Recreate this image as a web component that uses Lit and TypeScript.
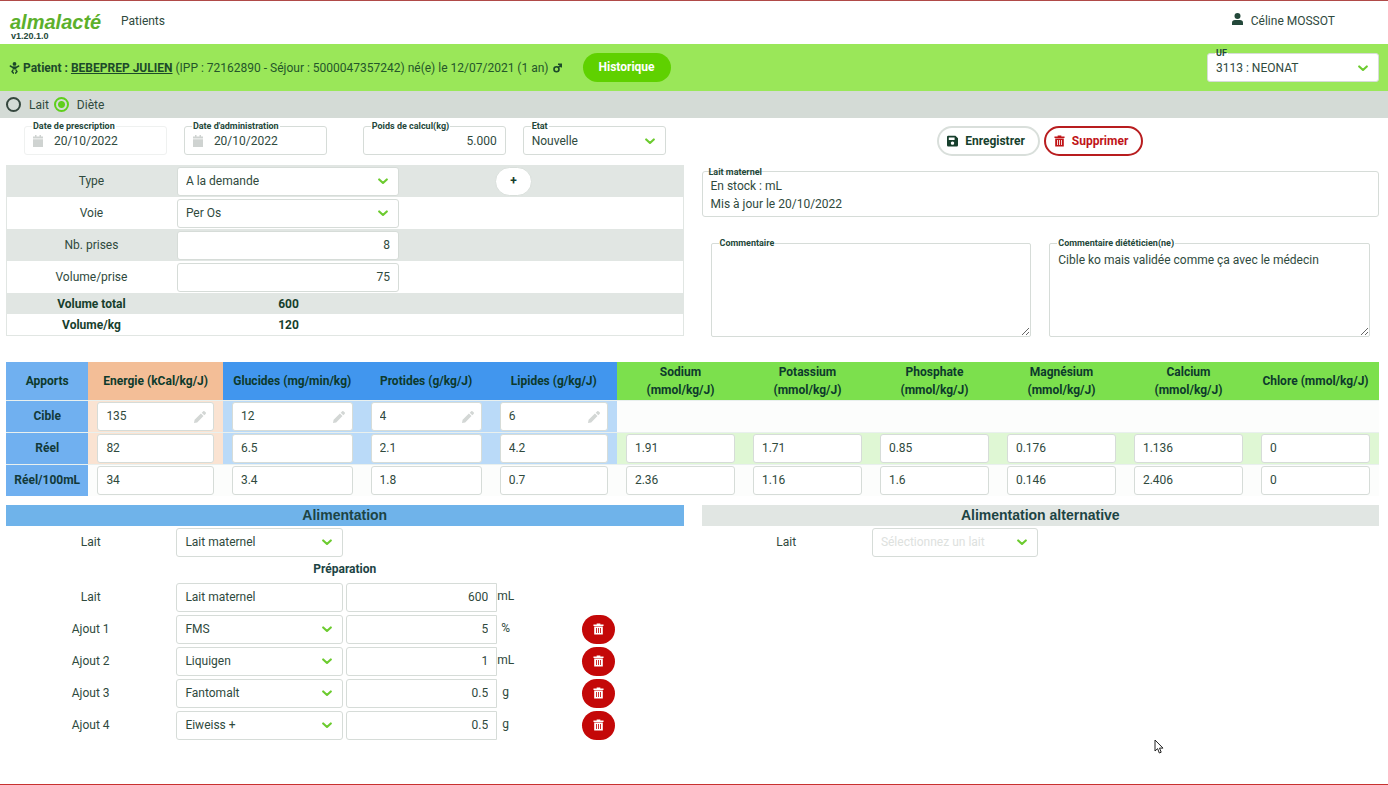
import { LitElement, html, css, svg, nothing } from "lit";
import { customElement, property } from "lit/decorators.js";

const chevron = html`<svg class="chevron" viewBox="0 0 10 7" aria-hidden="true">
  <path d="M1.2 1.4 L5 5 L8.8 1.4" fill="none" stroke="#6ccb2f" stroke-width="2.1" stroke-linecap="round" stroke-linejoin="round" />
</svg>`;

const trash = svg`<path fill="currentColor" d="M4 0h4v1h3.5v1.6H.5V1H4z" />
  <path fill="currentColor" fill-rule="evenodd" d="M1.3 3.3h9.4V12H1.3zM3.3 4.9v5.4h.9V4.9zm2.2 0v5.4h.9V4.9zm2.2 0v5.4h.9V4.9z" />`;

const pencil = html`<svg class="pencil" viewBox="0 0 12 12" aria-hidden="true">
  <path fill="#d3d7d5" d="M0 12l.6-3.2L6.900 2.500l2.600 2.600L3.200 11.400zM7.700 1.700L9 .4a1.200 1.200 0 0 1 1.700 0l.9.9a1.200 1.200 0 0 1 0 1.700L10.300 4.300z" />
</svg>`;

interface Nutrient {
  label: string;
  unit: string;
  tone: string;
  target?: string;
  real: string;
  per100: string;
}

const nutrients: Nutrient[] = [
  { label: "Energie", unit: "(kCal/kg/J)", tone: "energy", target: "135", real: "82", per100: "34" },
  { label: "Glucides", unit: "(mg/min/kg)", tone: "macro", target: "12", real: "6.5", per100: "3.4" },
  { label: "Protides", unit: "(g/kg/J)", tone: "macro", target: "4", real: "2.1", per100: "1.8" },
  { label: "Lipides", unit: "(g/kg/J)", tone: "macro", target: "6", real: "4.2", per100: "0.7" },
  { label: "Sodium", unit: "(mmol/kg/J)", tone: "mineral", real: "1.91", per100: "2.36" },
  { label: "Potassium", unit: "(mmol/kg/J)", tone: "mineral", real: "1.71", per100: "1.16" },
  { label: "Phosphate", unit: "(mmol/kg/J)", tone: "mineral", real: "0.85", per100: "1.6" },
  { label: "Magnésium", unit: "(mmol/kg/J)", tone: "mineral", real: "0.176", per100: "0.146" },
  { label: "Calcium", unit: "(mmol/kg/J)", tone: "mineral", real: "1.136", per100: "2.406" },
  { label: "Chlore", unit: "(mmol/kg/J)", tone: "mineral", real: "0", per100: "0" },
];

const additions = [
  { name: "FMS", amount: "5", unit: "%" },
  { name: "Liquigen", amount: "1", unit: "mL" },
  { name: "Fantomalt", amount: "0.5", unit: "g" },
  { name: "Eiweiss +", amount: "0.5", unit: "g" },
];

const controlStyles = css`
  * {
    box-sizing: border-box;
  }
  .control {
    display: block;
    width: 100%;
    height: 29px;
    margin: 0;
    padding: 0 8px;
    border: 1px solid #d6dcd8;
    border-radius: 3px;
    background: #fff;
    color: #2f4a3d;
    font: 12px/16px Roboto, "Liberation Sans", sans-serif;
    appearance: none;
    outline: none;
  }
  .caption {
    position: absolute;
    left: 8px;
    top: -6px;
    z-index: 1;
    padding: 0 1px;
    background: linear-gradient(transparent 50%, #fff 50%);
    color: #24483a;
    font: bold 9px/12px Roboto, "Liberation Sans", sans-serif;
    white-space: nowrap;
  }
  .chevron {
    position: absolute;
    right: 11px;
    top: 50%;
    width: 10px;
    height: 7px;
    margin-top: -3px;
    pointer-events: none;
  }
`;

@customElement("select-box")
class SelectBox extends LitElement {
  @property() value = "";
  @property() name = "";
  @property() caption = "";
  @property({ type: Boolean }) empty = false;

  static styles = [
    controlStyles,
    css`
      :host {
        display: block;
        position: relative;
      }
      .control {
        padding: 0 28px 0 8px;
      }
      .empty {
        color: #dde1de;
      }
    `,
  ];

  render() {
    return html`
      <select id="s" class="control ${this.empty ? "empty" : ""}" aria-label=${this.caption ? nothing : this.name}>
        <option>${this.value}</option>
      </select>
      ${this.caption ? html`<label class="caption" for="s">${this.caption}</label>` : nothing}
      ${chevron}
    `;
  }
}

@customElement("app-root")
class AppRoot extends LitElement {
  static styles = [
    controlStyles,
    css`
      :host {
        display: block;
        min-height: 100vh;
        box-sizing: border-box;
        position: relative;
        border-top: 1px solid #b04a48;
        border-bottom: 1px solid #c8312f;
        background: #fff;
        color: #2f4a3d;
        font: 12px/18px Roboto, "Liberation Sans", sans-serif;
      }
      .top {
        display: flex;
        align-items: flex-start;
        height: 43px;
        padding: 11px 53px 0 10px;
      }
      .brand {
        display: flex;
        flex-direction: column;
        width: 111px;
      }
      .logo {
        color: #5cb02c;
        font: italic bold 20px/20px "Liberation Sans", Arial, sans-serif;
      }
      .version {
        padding-left: 1px;
        color: #24483a;
        font: bold 9px/8px "Liberation Sans", Arial, sans-serif;
      }
      .nav {
        color: inherit;
        text-decoration: none;
      }
      .user {
        display: flex;
        gap: 8px;
        margin-left: auto;
      }
      .user svg {
        width: 11px;
        height: 12px;
        margin-top: 1px;
      }
      .patient {
        display: flex;
        align-items: center;
        height: 47px;
        padding: 0 9px;
        background: #9ae759;
      }
      .who {
        display: flex;
        align-items: center;
        color: #24562a;
      }
      .who strong,
      .who a {
        color: #1c4a2a;
        font-weight: bold;
      }
      .baby {
        width: 11px;
        height: 12px;
        margin-right: 3px;
      }
      .male {
        width: 9px;
        height: 10px;
        margin-left: 4px;
      }
      .history {
        height: 29px;
        margin-left: 21px;
        padding: 0 16px;
        border: 0;
        border-radius: 15px;
        background: #5fd100;
        color: #fff;
        font: bold 12px/29px Roboto, "Liberation Sans", sans-serif;
      }
      .unit-select {
        width: 172px;
        margin-left: auto;
      }
      .modes {
        display: flex;
        align-items: center;
        gap: 5px;
        height: 27px;
        padding: 0 6px;
        background: #d4dbd6;
      }
      .mode {
        display: flex;
        align-items: center;
        gap: 8px;
      }
      .radio {
        width: 15px;
        height: 15px;
        margin: 0;
        border: 2px solid #35473e;
        border-radius: 50%;
        background: transparent;
        appearance: none;
      }
      .radio:checked {
        border-color: #5fcf1c;
        background: radial-gradient(circle, #5fcf1c 3px, transparent 4px);
      }
      .content {
        padding: 8px 9px 0 6px;
      }
      .halves {
        display: grid;
        grid-template-columns: 1fr 1fr;
        column-gap: 18px;
      }
      .fields {
        display: grid;
        grid-template-columns: repeat(2, 1fr);
      }
      .pair {
        display: grid;
        grid-template-columns: repeat(2, 1fr);
        gap: 17px;
        padding: 0 18px;
      }
      .field {
        position: relative;
      }
      .with-icon {
        padding-left: 29px;
      }
      .muted {
        border-color: #eff1f0;
      }
      .calendar {
        position: absolute;
        left: 9px;
        top: 9px;
        width: 10px;
        height: 12px;
      }
      .right {
        text-align: right;
      }
      .actions {
        display: flex;
        justify-content: center;
        gap: 4px;
      }
      .action {
        display: flex;
        align-items: center;
        gap: 7px;
        height: 30px;
        padding: 0 13px 0 8px;
        border: 2px solid #d9dfdb;
        border-radius: 15px;
        background: #fff;
        color: #173f2d;
        font: bold 12px/16px Roboto, "Liberation Sans", sans-serif;
      }
      .action svg {
        width: 11px;
        height: 12px;
      }
      .danger {
        border-color: #b81d1f;
        color: #c01417;
      }
      .summary {
        align-self: start;
        margin-top: 9px;
        border: 1px solid #e1e6e3;
        border-top: 0;
      }
      .line {
        display: grid;
        grid-template-columns: minmax(0, 3fr) minmax(0, 4fr) minmax(0, 4fr) minmax(0, 1fr);
        align-items: center;
        height: 32px;
        text-align: center;
      }
      .line select-box,
      .line > .control,
      .prep select-box,
      .prep > .control {
        width: calc(100% - 3px);
        margin: 0 2px 0 1px;
      }
      .line:nth-child(odd) {
        background: #e1e6e3;
      }
      .total {
        height: 21px;
        color: #173f2d;
        font-weight: bold;
      }
      .add {
        justify-self: center;
        width: 37px;
        height: 29px;
        padding: 0;
        border: 1px solid #d9dfdb;
        border-radius: 15px;
        background: #fff;
        color: #173f2d;
        font: bold 12px/24px Roboto, sans-serif;
      }
      .stock {
        position: relative;
        height: 46px;
        margin-top: 15px;
        padding: 5px 8px;
        border: 1px solid #d6dcd8;
        border-radius: 3px;
      }
      .stock .caption {
        left: 5px;
      }
      .comments {
        display: grid;
        grid-template-columns: 1fr 1fr;
        gap: 18px;
        padding: 26px 9px 0;
      }
      .area {
        height: 94px;
        padding: 7px 8px;
        border-radius: 2px;
        font: 12px/18px Roboto, "Liberation Sans", sans-serif;
        resize: vertical;
      }
      .intake {
        width: 100%;
        margin-top: 25px;
        table-layout: fixed;
        border-collapse: collapse;
      }
      .c-head {
        width: 6%;
      }
      .c-energy {
        width: 9.8%;
      }
      .c-glucides {
        width: 10.1%;
      }
      .c-protides {
        width: 9.4%;
      }
      .c-lipides {
        width: 9.2%;
      }
      .intake th,
      .intake td {
        height: 32px;
        padding: 0 9px;
        border-top: 1px solid #e9f0ee;
      }
      .intake th {
        padding: 0;
        background: #70b0f0;
        color: #123a3a;
      }
      .intake thead th {
        height: 38px;
        padding: 0 8px;
        border: 0;
        color: #0d3a2c;
      }
      .intake thead th.energy {
        background: #f3be97;
      }
      .intake thead th.macro {
        background: #4196ee;
      }
      .intake thead th.mineral {
        background: #7ce04d;
      }
      .intake td {
        background: #fcfdfc;
      }
      .intake .tinted .energy {
        background: #fae3d2;
      }
      .intake .tinted .macro {
        background: #badaf8;
      }
      .intake .real .mineral {
        background: #dff7d4;
      }
      .pencil {
        position: absolute;
        right: 8px;
        top: 9px;
        width: 12px;
        height: 12px;
      }
      .feeding {
        margin-top: 9px;
      }
      .title {
        margin: 0;
        background: #e1e6e3;
        color: #1d4444;
        font: bold 14px/21px "Liberation Sans", Arial, sans-serif;
        text-align: center;
      }
      .blue {
        background: #6fb3ea;
      }
      .prep {
        display: grid;
        grid-template-columns: repeat(4, minmax(0, 1fr));
        align-items: center;
        height: 32px;
        text-align: center;
      }
      .subtitle {
        margin: 0;
        color: #1d4444;
        font: bold 12px/23px Roboto, "Liberation Sans", sans-serif;
        text-align: center;
      }
      .quantity {
        display: grid;
        grid-template-columns: 1fr 17px;
        padding-left: 1px;
      }
      .quantity .control {
        border-radius: 3px 0 0 3px;
      }
      .unit {
        line-height: 26px;
      }
      .remove {
        display: grid;
        place-items: center;
        justify-self: center;
        width: 33px;
        height: 29px;
        padding: 0;
        border: 0;
        border-radius: 15px;
        background: #c40808;
        color: #fff;
      }
      .remove svg {
        width: 11px;
        height: 12px;
      }
      .cursor {
        position: absolute;
        left: 1154px;
        top: 738px;
        width: 10px;
        height: 15px;
      }
    `,
  ];

  private dateField(id: string, label: string, muted: boolean) {
    return html`<div class="field">
      <label class="caption" for=${id}>${label}</label>
      <input id=${id} class="control with-icon ${muted ? "muted" : ""}" value="20/10/2022" />
      <svg class="calendar" viewBox="0 0 10 12" aria-hidden="true">
        <path fill="#cfd3d1" d="M2 0h1.500v1.500h3V0H8v1.500h2v2H0v-2h2zM0 4.200h10V12H0z" />
      </svg>
    </div>`;
  }

  private cell(n: Nutrient, row: string, value: string | undefined, editable = false) {
    return html`<td class=${n.tone}>
      ${value === undefined
        ? nothing
        : html`<div class="field">
            <input class="control" aria-label="${n.label} ${row}" value=${value} />
            ${editable ? pencil : nothing}
          </div>`}
    </td>`;
  }

  render() {
    return html`
      <header class="top">
        <div class="brand"><span class="logo">almalacté</span><span class="version">v1.20.1.0</span></div>
        <a class="nav" href="#patients">Patients</a>
        <div class="user">
          <svg viewBox="0 0 11 12" aria-hidden="true">
            <circle cx="5.500" cy="3" r="3" fill="#24483a" />
            <path fill="#24483a" d="M0 12V9.800C0 8 1.200 7 3 7h5c1.800 0 3 1 3 2.800V12z" />
          </svg>
          <span>Céline MOSSOT</span>
        </div>
      </header>

      <section class="patient">
        <svg class="baby" viewBox="0 0 11 12" aria-hidden="true">
          <circle cx="5.500" cy="1.900" r="1.900" fill="#1c4a2a" />
          <path fill="none" stroke="#1c4a2a" stroke-width="1.500" stroke-linecap="round" stroke-linejoin="round" d="M1.300 4L3.600 5.300H7.400L9.700 4" />
          <path fill="#1c4a2a" d="M3.600 4.800h3.800v2.700H3.600z" />
          <path fill="none" stroke="#1c4a2a" stroke-width="1.500" stroke-linecap="round" stroke-linejoin="round" d="M3.800 8.400L3 9.600L4.300 11.100M7.200 8.400L8 9.600L6.700 11.100" />
        </svg>
        <div class="who">
          <span><strong>Patient : </strong><a href="#dossier">BEBEPREP JULIEN</a> (IPP : 72162890 - Séjour : 5000047357242) né(e) le 12/07/2021 (1 an)</span>
          <svg class="male" viewBox="0 0 9 10" aria-hidden="true">
            <circle cx="3.500" cy="6.300" r="2.500" fill="none" stroke="#1c4a2a" stroke-width="1.600" />
            <path fill="none" stroke="#1c4a2a" stroke-width="1.400" d="M5.300 4.400L8 1.700M5 1.300H8.300V4.600" />
          </svg>
        </div>
        <button class="history">Historique</button>
        <select-box class="unit-select" caption="UF" value="3113 : NEONAT"></select-box>
      </section>

      <div class="modes">
        <label class="mode"><input class="radio" type="radio" name="mode" />Lait</label>
        <label class="mode"><input class="radio" type="radio" name="mode" checked />Diète</label>
      </div>

      <main class="content">
        <div class="halves">
          <div class="fields">
            <div class="pair">
              ${this.dateField("prescription", "Date de prescription", true)}
              ${this.dateField("administration", "Date d'administration", false)}
            </div>
            <div class="pair">
              <div class="field">
                <label class="caption" for="poids">Poids de calcul(kg)</label>
                <input id="poids" class="control right" value="5.000" />
              </div>
              <select-box caption="Etat" value="Nouvelle"></select-box>
            </div>
          </div>
          <div class="actions">
            <button class="action">
              <svg viewBox="0 0 11 12" aria-hidden="true">
                <path fill="currentColor" fill-rule="evenodd" d="M1.200 .8H8.400L11 3.300V10.200a1.200 1.200 0 0 1-1.200 1.200H1.200A1.200 1.200 0 0 1 0 10.200V2A1.200 1.200 0 0 1 1.200 .8zM1.800 2.400V5H7.600V2.400zM5.500 6.400a1.700 1.700 0 1 0 .01 0z" />
              </svg>
              Enregistrer
            </button>
            <button class="action danger">
              <svg viewBox="0 0 12 12" aria-hidden="true">${trash}</svg>
              Supprimer
            </button>
          </div>
        </div>

        <div class="halves">
          <div class="summary">
            <div class="line">
              <span>Type</span>
              <select-box name="Type" value="A la demande"></select-box>
              <button class="add" aria-label="Ajouter">+</button>
            </div>
            <div class="line">
              <span>Voie</span>
              <select-box name="Voie" value="Per Os"></select-box>
            </div>
            <div class="line">
              <label for="prises">Nb. prises</label>
              <input id="prises" class="control right" value="8" />
            </div>
            <div class="line">
              <label for="volume">Volume/prise</label>
              <input id="volume" class="control right" value="75" />
            </div>
            <div class="line total"><span>Volume total</span><span>600</span></div>
            <div class="line total"><span>Volume/kg</span><span>120</span></div>
          </div>
          <div>
            <div class="stock">
              <span class="caption">Lait maternel</span>
              <div>En stock : mL</div>
              <div>Mis à jour le 20/10/2022</div>
            </div>
            <div class="comments">
              <div class="field">
                <label class="caption" for="com">Commentaire</label>
                <textarea id="com" class="control area"></textarea>
              </div>
              <div class="field">
                <label class="caption" for="diet">Commentaire diététicien(ne)</label>
                <textarea id="diet" class="control area" .value=${"Cible ko mais validée comme ça avec le médecin"}></textarea>
              </div>
            </div>
          </div>
        </div>

        <table class="intake">
          <colgroup>
            <col class="c-head" />
            <col class="c-energy" />
            <col class="c-glucides" />
            <col class="c-protides" />
            <col class="c-lipides" />
            <col span="6" />
          </colgroup>
          <thead>
            <tr>
              <th>Apports</th>
              ${nutrients.map((n) => html`<th class=${n.tone}>${n.label} ${n.unit}</th>`)}
            </tr>
          </thead>
          <tbody>
            <tr class="tinted">
              <th>Cible</th>
              ${nutrients.map((n) => this.cell(n, "cible", n.target, true))}
            </tr>
            <tr class="tinted real">
              <th>Réel</th>
              ${nutrients.map((n) => this.cell(n, "réel", n.real))}
            </tr>
            <tr>
              <th>Réel/100mL</th>
              ${nutrients.map((n) => this.cell(n, "réel pour 100 mL", n.per100))}
            </tr>
          </tbody>
        </table>

        <div class="halves feeding">
          <section>
            <h2 class="title blue">Alimentation</h2>
            <div class="prep">
              <span>Lait</span>
              <select-box name="Lait" value="Lait maternel"></select-box>
            </div>
            <h3 class="subtitle">Préparation</h3>
            <div class="prep">
              <label for="base">Lait</label>
              <input id="base" class="control" value="Lait maternel" />
              <div class="quantity">
                <input class="control right" aria-label="Quantité de lait" value="600" />
                <span class="unit">mL</span>
              </div>
            </div>
            ${additions.map(
              (a, i) => html`<div class="prep">
                <span>Ajout ${i + 1}</span>
                <select-box name="Ajout ${i + 1}" value=${a.name}></select-box>
                <div class="quantity">
                  <input class="control right" aria-label="Quantité ajout ${i + 1}" value=${a.amount} />
                  <span class="unit">${a.unit}</span>
                </div>
                <button class="remove" aria-label="Supprimer ajout ${i + 1}">
                  <svg viewBox="0 0 12 12" aria-hidden="true">${trash}</svg>
                </button>
              </div>`
            )}
          </section>
          <section>
            <h2 class="title">Alimentation alternative</h2>
            <div class="prep">
              <span>Lait</span>
              <select-box name="Lait alternatif" value="Sélectionnez un lait" empty></select-box>
            </div>
          </section>
        </div>
      </main>

      <svg class="cursor" viewBox="0 0 10 15" aria-hidden="true">
        <path fill="#fff" stroke="#222" stroke-width="1" stroke-linejoin="round" d="M1 1v11l2.600-2.400L5.300 14l1.900-.8L5.500 9.100H9z" />
      </svg>
    `;
  }
}
